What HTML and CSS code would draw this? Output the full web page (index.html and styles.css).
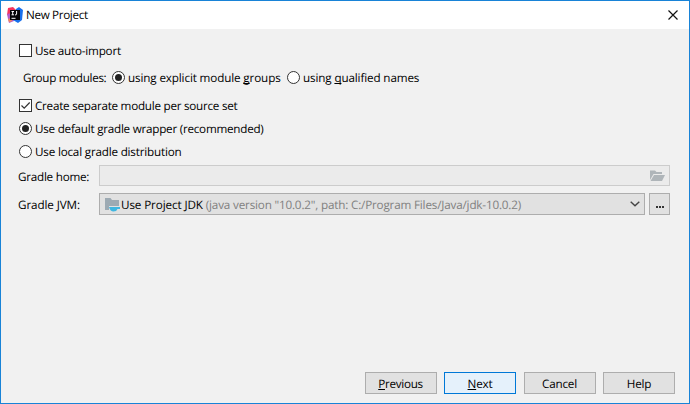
FILE: index.html
```
<!DOCTYPE html>
<html lang="en">
<head>
<meta charset="utf-8">
<title>New Project</title>
<link rel="stylesheet" href="styles.css">
</head>
<body>
<div class="window">
  <header class="titlebar">
    <svg class="logo" width="16" height="16" viewBox="0 0 16 16">
      <path d="M1 1l5-1 4 4-3 6-7-2z" fill="#f5325b"/>
      <path d="M0 7l5-1 2 8-5 2-1-4z" fill="#b65bc5"/>
      <path d="M1 12l3-1 1 3-3 1z" fill="#f58a55"/>
      <path d="M9 2l3-2 4 3-1 10-4 3-5-3z" fill="#176fec"/>
      <path d="M3 3h10v10H3z" fill="#060608"/>
      <path d="M4.500 4.500h2.500M5.700 4.500v3.300M4.500 7.800h2.500M9.600 4v3.300q0 .7-1.600.6" fill="none" stroke="#fff"/>
      <path d="M4.500 11.300h4" stroke="#fff"/>
    </svg>
    <span class="title">New Project</span>
    <svg class="close" width="10" height="10" viewBox="0 0 10 10"><path d="M.5.5l9 9M9.500.5l-9 9" stroke="#111" stroke-width="1.200"/></svg>
  </header>
  <main class="content">
    <label class="row auto"><i class="check"></i><span class="t-auto">Use auto-import</span></label>
    <div class="row group">
      <span class="t-group">Group modules:</span>
      <i class="radio on"></i><span class="t-explicit">using explicit module <u>g</u>roups</span>
      <i class="radio second"></i><span class="t-qualified">using <u>q</u>ualified names</span>
    </div>
    <label class="row separate"><i class="check"><svg width="11" height="11" viewBox="0 0 11 11"><path d="M1.500 5.500l2.700 2.700 5.500-5.700" fill="none" stroke="#333" stroke-width="1.200"/></svg></i><span class="t-separate">Create separate module per source set</span></label>
    <label class="row wrapper"><i class="radio on"></i><span class="t-wrapper">Use default gradle wrapper (recommended)</span></label>
    <label class="row local"><i class="radio"></i><span class="t-local">Use local gradle distribution</span></label>
    <div class="field home">
      <span class="caption t-home">Gradle home:</span>
      <div class="path">
        <svg width="15" height="12" viewBox="0 0 15 12"><path d="M0 10V.5h5L6.500 2H12v2H3.500z" fill="#afb5b9"/><path d="M4 5h11l-3 6H.5z" fill="#afb5b9"/></svg>
      </div>
    </div>
    <div class="field jvm">
      <span class="caption t-jvm">Gradle JVM:</span>
      <div class="combo">
        <svg class="jdk" width="16" height="15" viewBox="0 0 16 15"><path d="M0 1h5.500L7 3h7v6H4v4H0z" fill="#9daab3"/><path d="M4 10h11v2h-2.500q-.8 2.500-4 2.500T4 10z" fill="#40b6e0"/></svg>
        <span class="t-jdk">Use Project JDK</span>
        <span class="detail">(java version "10.0.2", path: C:/Program Files/Java/jdk-10.0.2)</span>
        <svg class="arrow" width="10" height="6" viewBox="0 0 10 6"><path d="M.7.7L5 4.800 9.300.7" fill="none" stroke="#444" stroke-width="1.400"/></svg>
      </div>
      <div class="more"><svg width="8" height="2" viewBox="0 0 8 2"><path d="M0 0h2v2H0zM3 0h2v2H3zM6 0h2v2H6z" fill="#333"/></svg></div>
    </div>
  </main>
  <footer class="buttons">
    <div class="btn"><span class="t-prev"><u>P</u>revious</span></div>
    <div class="btn primary"><span class="t-next"><u>N</u>ext</span></div>
    <div class="btn"><span class="t-cancel">Cancel</span></div>
    <div class="btn"><span class="t-help">Help</span></div>
  </footer>
</div>
</body>
</html>
```
FILE: styles.css
```
* { box-sizing: border-box; }
body { margin: 0; font: 11.7px/16px "Open Sans", "Noto Sans", sans-serif; color: #000; text-rendering: geometricPrecision; }
.window { width: 690px; height: 404px; border: 1px solid #1883d7; background: #f1f1f1; display: flex; flex-direction: column; white-space: nowrap; }
.titlebar { height: 28px; flex: none; background: #fff; display: flex; align-items: center; padding: 0 11px 0 6px; }
.logo { margin-right: 3px; }
.title { letter-spacing: -.35px; }
.close { margin-left: auto; }
.content { flex: 1; padding: 13px 19px 0 17px; }
.row { display: flex; align-items: center; height: 16px; }
.row > span { padding-top: 1px; }
.check, .radio { flex: none; width: 13px; height: 13px; margin-right: 4px; border: 1px solid #333; background: #fff; display: flex; align-items: center; justify-content: center; }
.row > .check, .row > .radio { margin-left: 1px; margin-right: 3px; }
.radio { border-radius: 50%; }
.radio.on::before { content: ""; width: 7px; height: 7px; border-radius: 50%; background: #222; }
.group { margin-top: 11px; padding-left: 5px; }
.group > .radio { margin: 0 3px 0 5px; }
.t-auto { letter-spacing: -.22px; }
.t-group { width: 84px; letter-spacing: -.33px; }
.t-explicit { width: 154px; letter-spacing: -.14px; }
.t-qualified { letter-spacing: -.14px; }
.t-separate { letter-spacing: -.26px; }
.t-wrapper { letter-spacing: -.25px; }
.t-local { letter-spacing: -.2px; }
.t-home { letter-spacing: -.25px; }
.t-jvm, .t-jdk { letter-spacing: -.12px; }
.t-prev { letter-spacing: -.3px; }
.t-next { letter-spacing: -.2px; }
.t-cancel, .t-help { letter-spacing: -.2px; }
.separate { margin-top: 12px; }
.wrapper, .local { margin-top: 7px; }
.field { display: flex; align-items: center; }
.home { margin-top: 6px; height: 21px; }
.jvm { margin-top: 7px; height: 22px; }
.caption { width: 81px; flex: none; padding-top: 2px; }
.path { flex: 1; height: 21px; border: 1px solid #ccc; background: #ebebeb; display: flex; align-items: center; justify-content: flex-end; padding-right: 4px; }
.combo { flex: 1; height: 22px; border: 1px solid #adadad; background: #e1e1e1; display: flex; align-items: center; padding: 0 4px 0 5px; }
.combo > span { padding-top: 2px; }
.detail { color: #808080; margin-left: 3px; letter-spacing: -.18px; }
.arrow { margin-left: auto; }
.more { width: 21px; height: 22px; margin-left: 4px; border: 1px solid #adadad; background: #e1e1e1; display: flex; justify-content: center; align-items: flex-end; padding-bottom: 6px; }
.buttons { display: flex; justify-content: flex-end; gap: 7.5px; padding: 0 14px 9px 0; }
.btn { width: 72px; height: 22px; border: 1px solid #adadad; background: #e1e1e1; display: flex; align-items: center; justify-content: center; }
.btn > span { padding-top: 1px; }
.primary { border-color: #0078d7; background: #e5f1fb; }
u { text-underline-offset: 1px; text-decoration-skip-ink: none; }
```
